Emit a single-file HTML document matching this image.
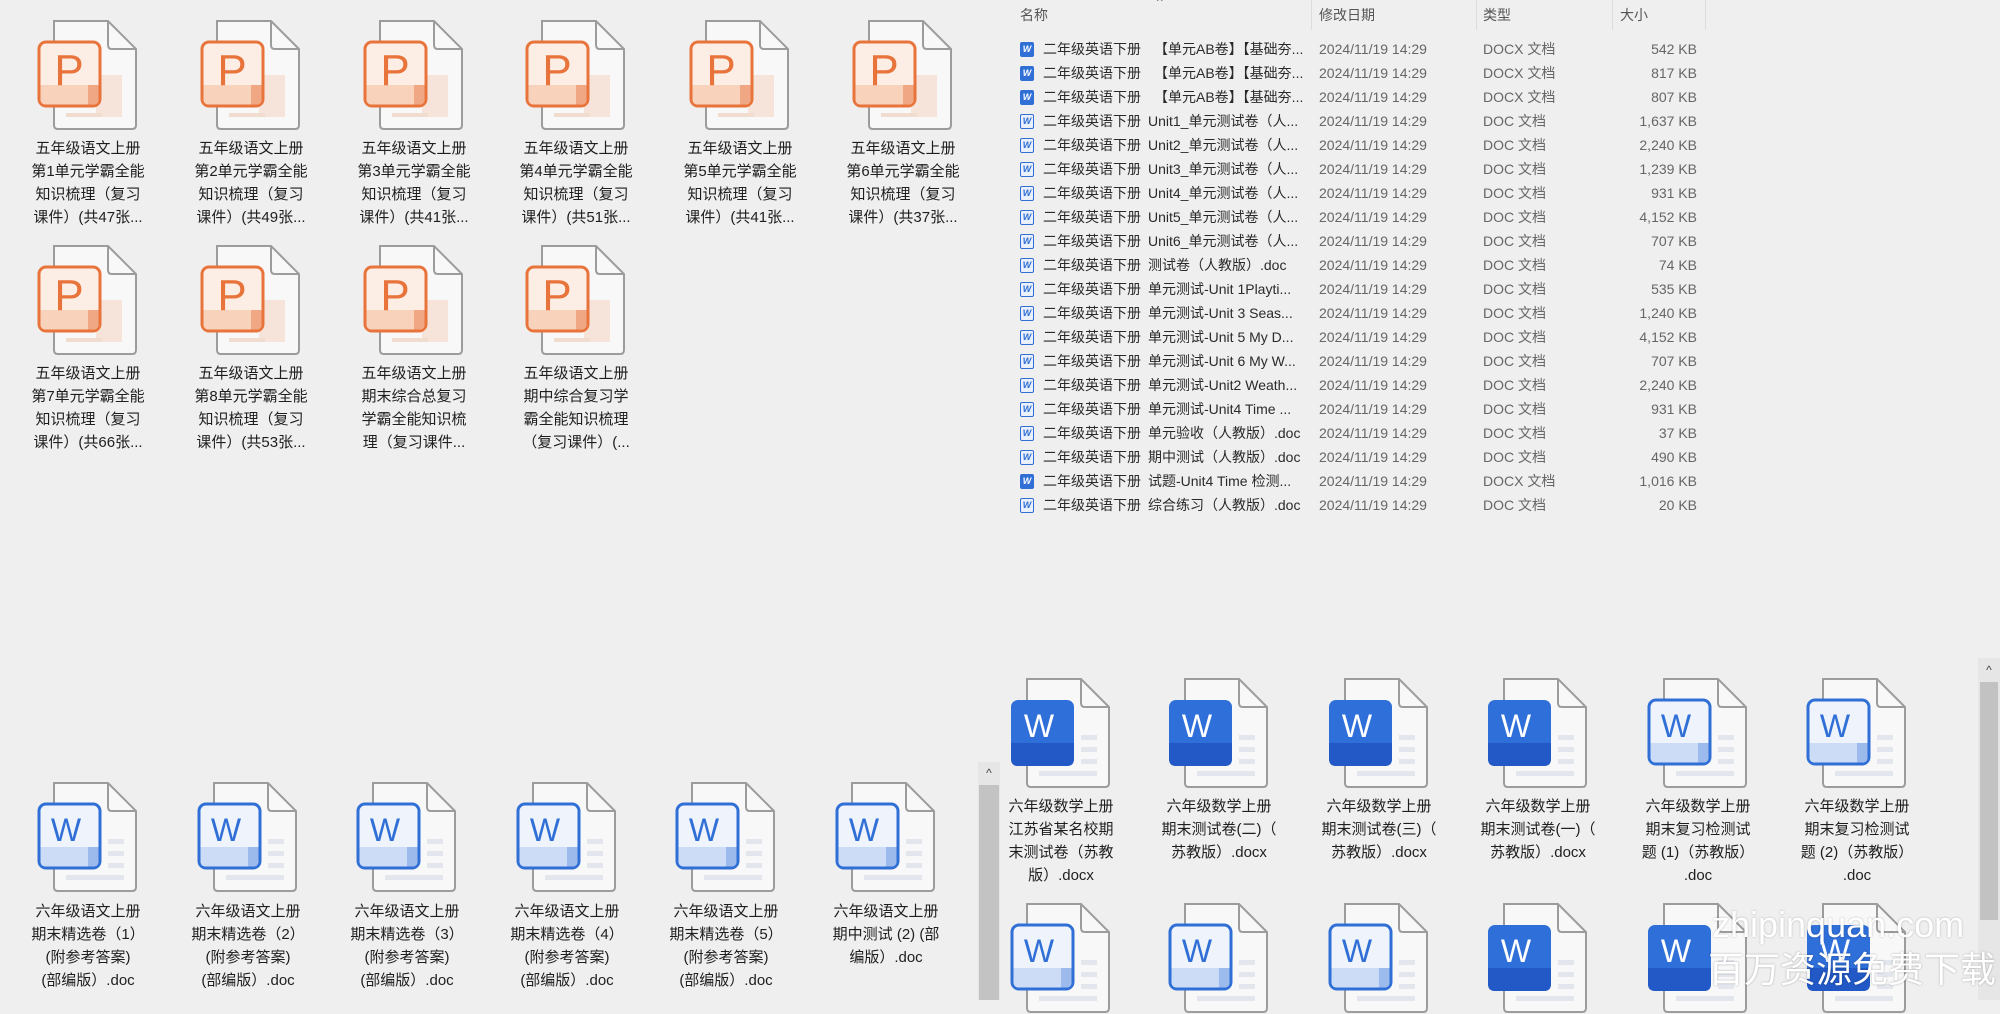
<!DOCTYPE html>
<html><head><meta charset="utf-8">
<style>
*{margin:0;padding:0;box-sizing:border-box}
html,body{width:2000px;height:1000px;overflow:hidden;background:#efefef;font-family:"Liberation Sans","Noto Sans CJK SC",sans-serif;color:#1e1e1e}
.it{position:absolute;width:170px}
.it svg{position:absolute;left:33px;top:0}
.it .t{position:absolute;left:0;width:170px;text-align:center;font-size:15px;line-height:23px;white-space:nowrap}
.row{position:absolute;left:1020px;height:24px;font-size:14px;line-height:24px;color:#2a2a2a;white-space:nowrap;width:700px}
.row span{position:absolute;top:0}
.ic{position:absolute;left:0;top:5px;width:14px;height:15px;border:1.5px solid #2f6fd6;border-radius:2px;background:#e9f0fb;color:#2f6fd6;font-size:9px;line-height:12px;text-align:center;font-weight:bold}
.ic.x{background:#2f6fd6;color:#fff}
.hd{position:absolute;top:5px;font-size:14px;color:#555}
.sep{position:absolute;top:0;width:1px;height:30px;background:#dcdcdc}
</style></head><body>

<svg width="0" height="0" style="position:absolute">
<defs>
<g id="page">
<path d="M18 2 H72 L100 30 V106 Q100 110 96 110 H22 Q18 110 18 106 Z" fill="#f8f8f8" stroke="#9c9c9c" stroke-width="2"/>
<path d="M72 2 V26 Q72 30 76 30 H100" fill="none" stroke="#9c9c9c" stroke-width="2"/>
</g>
<g id="ppt">
<use href="#page"/>
<rect x="60" y="56" width="26" height="42" fill="#f6e4da"/>
<rect x="30" y="94" width="36" height="4" fill="#f1dcd0"/>
<rect x="3" y="23" width="61" height="64" rx="7" fill="#fdeee5" stroke="#e8743b" stroke-width="3"/>
<path d="M4.5 66 H62.5 V80 Q62.5 85.5 57 85.5 H10 Q4.5 85.5 4.5 80 Z" fill="#f8d2bb"/>
<path d="M52 66 H62.5 V80 Q62.5 85.5 57 85.5 H52 Z" fill="#f0a884"/>
<text x="33" y="66" text-anchor="middle" font-family="Liberation Sans" font-size="44" fill="#e8743b">P</text>
</g>
<g id="lines">
<rect x="72" y="58" width="16" height="5" fill="#e3e6ec"/>
<rect x="72" y="70" width="16" height="5" fill="#e3e6ec"/>
<rect x="72" y="82" width="16" height="5" fill="#e3e6ec"/>
<rect x="30" y="94" width="58" height="5" fill="#e3e6ec"/>
</g>
<g id="wl">
<use href="#page"/><use href="#lines"/>
<rect x="3" y="23" width="61" height="64" rx="7" fill="#eef3fc" stroke="#2f6fd6" stroke-width="3"/>
<path d="M4.5 66 H62.5 V80 Q62.5 85.5 57 85.5 H10 Q4.5 85.5 4.5 80 Z" fill="#cddcf6"/>
<path d="M52 66 H62.5 V80 Q62.5 85.5 57 85.5 H52 Z" fill="#9dbaec"/>
<text x="30" y="60" text-anchor="middle" font-family="Liberation Sans" font-size="32" fill="#2f6fd6">W</text>
</g>
<g id="ws">
<use href="#page"/><use href="#lines"/>
<rect x="2" y="23" width="63" height="66" rx="7" fill="#2f6fd9"/>
<path d="M2 66 H65 V82 Q65 89 58 89 H9 Q2 89 2 82 Z" fill="#2259c6"/>
<text x="30" y="60" text-anchor="middle" font-family="Liberation Sans" font-size="32" fill="#fff">W</text>
</g>
</defs>
</svg>

<!-- PPT grid -->
<div class="it" style="left:3px;top:19px"><svg width="104" height="112"><use href="#ppt"/></svg><div class="t" style="top:118px">五年级语文上册<br>第1单元学霸全能<br>知识梳理（复习<br>课件）(共47张...</div></div>
<div class="it" style="left:166px;top:19px"><svg width="104" height="112"><use href="#ppt"/></svg><div class="t" style="top:118px">五年级语文上册<br>第2单元学霸全能<br>知识梳理（复习<br>课件）(共49张...</div></div>
<div class="it" style="left:329px;top:19px"><svg width="104" height="112"><use href="#ppt"/></svg><div class="t" style="top:118px">五年级语文上册<br>第3单元学霸全能<br>知识梳理（复习<br>课件）(共41张...</div></div>
<div class="it" style="left:491px;top:19px"><svg width="104" height="112"><use href="#ppt"/></svg><div class="t" style="top:118px">五年级语文上册<br>第4单元学霸全能<br>知识梳理（复习<br>课件）(共51张...</div></div>
<div class="it" style="left:655px;top:19px"><svg width="104" height="112"><use href="#ppt"/></svg><div class="t" style="top:118px">五年级语文上册<br>第5单元学霸全能<br>知识梳理（复习<br>课件）(共41张...</div></div>
<div class="it" style="left:818px;top:19px"><svg width="104" height="112"><use href="#ppt"/></svg><div class="t" style="top:118px">五年级语文上册<br>第6单元学霸全能<br>知识梳理（复习<br>课件）(共37张...</div></div>

<div class="it" style="left:3px;top:244px"><svg width="104" height="112"><use href="#ppt"/></svg><div class="t" style="top:118px">五年级语文上册<br>第7单元学霸全能<br>知识梳理（复习<br>课件）(共66张...</div></div>
<div class="it" style="left:166px;top:244px"><svg width="104" height="112"><use href="#ppt"/></svg><div class="t" style="top:118px">五年级语文上册<br>第8单元学霸全能<br>知识梳理（复习<br>课件）(共53张...</div></div>
<div class="it" style="left:329px;top:244px"><svg width="104" height="112"><use href="#ppt"/></svg><div class="t" style="top:118px">五年级语文上册<br>期末综合总复习<br>学霸全能知识梳<br>理（复习课件...</div></div>
<div class="it" style="left:491px;top:244px"><svg width="104" height="112"><use href="#ppt"/></svg><div class="t" style="top:118px">五年级语文上册<br>期中综合复习学<br>霸全能知识梳理<br>（复习课件）(...</div></div>

<!-- list header -->
<div class="hd" style="left:1020px">名称</div>
<div class="hd" style="left:1157px;top:-6px;font-size:12px">^</div>
<div class="hd" style="left:1319px">修改日期</div>
<div class="hd" style="left:1483px">类型</div>
<div class="hd" style="left:1620px">大小</div>
<div class="sep" style="left:1311px"></div>
<div class="sep" style="left:1476px"></div>
<div class="sep" style="left:1612px"></div>
<div class="sep" style="left:1705px"></div>

<div class="row" style="top:37px"><i class="ic x">W</i><span style="left:23px">二年级英语下册</span><span style="left:134px">【单元AB卷】【基础夯...</span><span style="left:299px;color:#666">2024/11/19 14:29</span><span style="left:463px;color:#666">DOCX 文档</span><span style="right:23px;color:#666">542 KB</span></div>
<div class="row" style="top:61px"><i class="ic x">W</i><span style="left:23px">二年级英语下册</span><span style="left:134px">【单元AB卷】【基础夯...</span><span style="left:299px;color:#666">2024/11/19 14:29</span><span style="left:463px;color:#666">DOCX 文档</span><span style="right:23px;color:#666">817 KB</span></div>
<div class="row" style="top:85px"><i class="ic x">W</i><span style="left:23px">二年级英语下册</span><span style="left:134px">【单元AB卷】【基础夯...</span><span style="left:299px;color:#666">2024/11/19 14:29</span><span style="left:463px;color:#666">DOCX 文档</span><span style="right:23px;color:#666">807 KB</span></div>
<div class="row" style="top:109px"><i class="ic">W</i><span style="left:23px">二年级英语下册</span><span style="left:128px">Unit1_单元测试卷（人...</span><span style="left:299px;color:#666">2024/11/19 14:29</span><span style="left:463px;color:#666">DOC 文档</span><span style="right:23px;color:#666">1,637 KB</span></div>
<div class="row" style="top:133px"><i class="ic">W</i><span style="left:23px">二年级英语下册</span><span style="left:128px">Unit2_单元测试卷（人...</span><span style="left:299px;color:#666">2024/11/19 14:29</span><span style="left:463px;color:#666">DOC 文档</span><span style="right:23px;color:#666">2,240 KB</span></div>
<div class="row" style="top:157px"><i class="ic">W</i><span style="left:23px">二年级英语下册</span><span style="left:128px">Unit3_单元测试卷（人...</span><span style="left:299px;color:#666">2024/11/19 14:29</span><span style="left:463px;color:#666">DOC 文档</span><span style="right:23px;color:#666">1,239 KB</span></div>
<div class="row" style="top:181px"><i class="ic">W</i><span style="left:23px">二年级英语下册</span><span style="left:128px">Unit4_单元测试卷（人...</span><span style="left:299px;color:#666">2024/11/19 14:29</span><span style="left:463px;color:#666">DOC 文档</span><span style="right:23px;color:#666">931 KB</span></div>
<div class="row" style="top:205px"><i class="ic">W</i><span style="left:23px">二年级英语下册</span><span style="left:128px">Unit5_单元测试卷（人...</span><span style="left:299px;color:#666">2024/11/19 14:29</span><span style="left:463px;color:#666">DOC 文档</span><span style="right:23px;color:#666">4,152 KB</span></div>
<div class="row" style="top:229px"><i class="ic">W</i><span style="left:23px">二年级英语下册</span><span style="left:128px">Unit6_单元测试卷（人...</span><span style="left:299px;color:#666">2024/11/19 14:29</span><span style="left:463px;color:#666">DOC 文档</span><span style="right:23px;color:#666">707 KB</span></div>
<div class="row" style="top:253px"><i class="ic">W</i><span style="left:23px">二年级英语下册</span><span style="left:128px">测试卷（人教版）.doc</span><span style="left:299px;color:#666">2024/11/19 14:29</span><span style="left:463px;color:#666">DOC 文档</span><span style="right:23px;color:#666">74 KB</span></div>
<div class="row" style="top:277px"><i class="ic">W</i><span style="left:23px">二年级英语下册</span><span style="left:128px">单元测试-Unit 1Playti...</span><span style="left:299px;color:#666">2024/11/19 14:29</span><span style="left:463px;color:#666">DOC 文档</span><span style="right:23px;color:#666">535 KB</span></div>
<div class="row" style="top:301px"><i class="ic">W</i><span style="left:23px">二年级英语下册</span><span style="left:128px">单元测试-Unit 3 Seas...</span><span style="left:299px;color:#666">2024/11/19 14:29</span><span style="left:463px;color:#666">DOC 文档</span><span style="right:23px;color:#666">1,240 KB</span></div>
<div class="row" style="top:325px"><i class="ic">W</i><span style="left:23px">二年级英语下册</span><span style="left:128px">单元测试-Unit 5 My D...</span><span style="left:299px;color:#666">2024/11/19 14:29</span><span style="left:463px;color:#666">DOC 文档</span><span style="right:23px;color:#666">4,152 KB</span></div>
<div class="row" style="top:349px"><i class="ic">W</i><span style="left:23px">二年级英语下册</span><span style="left:128px">单元测试-Unit 6 My W...</span><span style="left:299px;color:#666">2024/11/19 14:29</span><span style="left:463px;color:#666">DOC 文档</span><span style="right:23px;color:#666">707 KB</span></div>
<div class="row" style="top:373px"><i class="ic">W</i><span style="left:23px">二年级英语下册</span><span style="left:128px">单元测试-Unit2 Weath...</span><span style="left:299px;color:#666">2024/11/19 14:29</span><span style="left:463px;color:#666">DOC 文档</span><span style="right:23px;color:#666">2,240 KB</span></div>
<div class="row" style="top:397px"><i class="ic">W</i><span style="left:23px">二年级英语下册</span><span style="left:128px">单元测试-Unit4 Time ...</span><span style="left:299px;color:#666">2024/11/19 14:29</span><span style="left:463px;color:#666">DOC 文档</span><span style="right:23px;color:#666">931 KB</span></div>
<div class="row" style="top:421px"><i class="ic">W</i><span style="left:23px">二年级英语下册</span><span style="left:128px">单元验收（人教版）.doc</span><span style="left:299px;color:#666">2024/11/19 14:29</span><span style="left:463px;color:#666">DOC 文档</span><span style="right:23px;color:#666">37 KB</span></div>
<div class="row" style="top:445px"><i class="ic">W</i><span style="left:23px">二年级英语下册</span><span style="left:128px">期中测试（人教版）.doc</span><span style="left:299px;color:#666">2024/11/19 14:29</span><span style="left:463px;color:#666">DOC 文档</span><span style="right:23px;color:#666">490 KB</span></div>
<div class="row" style="top:469px"><i class="ic x">W</i><span style="left:23px">二年级英语下册</span><span style="left:128px">试题-Unit4 Time 检测...</span><span style="left:299px;color:#666">2024/11/19 14:29</span><span style="left:463px;color:#666">DOCX 文档</span><span style="right:23px;color:#666">1,016 KB</span></div>
<div class="row" style="top:493px"><i class="ic">W</i><span style="left:23px">二年级英语下册</span><span style="left:128px">综合练习（人教版）.doc</span><span style="left:299px;color:#666">2024/11/19 14:29</span><span style="left:463px;color:#666">DOC 文档</span><span style="right:23px;color:#666">20 KB</span></div>

<!-- bottom-left word grid -->
<div class="it" style="left:3px;top:781px"><svg width="104" height="112"><use href="#wl"/></svg><div class="t" style="top:119px">六年级语文上册<br>期末精选卷（1）<br>(附参考答案)<br>(部编版）.doc</div></div>
<div class="it" style="left:163px;top:781px"><svg width="104" height="112"><use href="#wl"/></svg><div class="t" style="top:119px">六年级语文上册<br>期末精选卷（2）<br>(附参考答案)<br>(部编版）.doc</div></div>
<div class="it" style="left:322px;top:781px"><svg width="104" height="112"><use href="#wl"/></svg><div class="t" style="top:119px">六年级语文上册<br>期末精选卷（3）<br>(附参考答案)<br>(部编版）.doc</div></div>
<div class="it" style="left:482px;top:781px"><svg width="104" height="112"><use href="#wl"/></svg><div class="t" style="top:119px">六年级语文上册<br>期末精选卷（4）<br>(附参考答案)<br>(部编版）.doc</div></div>
<div class="it" style="left:641px;top:781px"><svg width="104" height="112"><use href="#wl"/></svg><div class="t" style="top:119px">六年级语文上册<br>期末精选卷（5）<br>(附参考答案)<br>(部编版）.doc</div></div>
<div class="it" style="left:801px;top:781px"><svg width="104" height="112"><use href="#wl"/></svg><div class="t" style="top:119px">六年级语文上册<br>期中测试 (2) (部<br>编版）.doc</div></div>

<div style="position:absolute;left:978px;top:762px;width:22px;height:238px;background:#e6e6e6"></div>
<div style="position:absolute;left:979px;top:785px;width:20px;height:215px;background:#c3c3c3"></div>
<div style="position:absolute;left:978px;top:763px;width:22px;text-align:center;font-size:12px;color:#444;line-height:20px">^</div>

<!-- bottom-right word grid -->
<div class="it" style="left:976px;top:677px"><svg width="104" height="112"><use href="#ws"/></svg><div class="t" style="top:118px">六年级数学上册<br>江苏省某名校期<br>末测试卷（苏教<br>版）.docx</div></div>
<div class="it" style="left:1134px;top:677px"><svg width="104" height="112"><use href="#ws"/></svg><div class="t" style="top:118px">六年级数学上册<br>期末测试卷(二)（<br>苏教版）.docx</div></div>
<div class="it" style="left:1294px;top:677px"><svg width="104" height="112"><use href="#ws"/></svg><div class="t" style="top:118px">六年级数学上册<br>期末测试卷(三)（<br>苏教版）.docx</div></div>
<div class="it" style="left:1453px;top:677px"><svg width="104" height="112"><use href="#ws"/></svg><div class="t" style="top:118px">六年级数学上册<br>期末测试卷(一)（<br>苏教版）.docx</div></div>
<div class="it" style="left:1613px;top:677px"><svg width="104" height="112"><use href="#wl"/></svg><div class="t" style="top:118px">六年级数学上册<br>期末复习检测试<br>题 (1)（苏教版）<br>.doc</div></div>
<div class="it" style="left:1772px;top:677px"><svg width="104" height="112"><use href="#wl"/></svg><div class="t" style="top:118px">六年级数学上册<br>期末复习检测试<br>题 (2)（苏教版）<br>.doc</div></div>

<div class="it" style="left:976px;top:902px"><svg width="104" height="112"><use href="#wl"/></svg></div>
<div class="it" style="left:1134px;top:902px"><svg width="104" height="112"><use href="#wl"/></svg></div>
<div class="it" style="left:1294px;top:902px"><svg width="104" height="112"><use href="#wl"/></svg></div>
<div class="it" style="left:1453px;top:902px"><svg width="104" height="112"><use href="#ws"/></svg></div>
<div class="it" style="left:1613px;top:902px"><svg width="104" height="112"><use href="#ws"/></svg></div>
<div class="it" style="left:1772px;top:902px"><svg width="104" height="112"><use href="#ws"/></svg></div>

<div style="position:absolute;left:1978px;top:658px;width:22px;height:342px;background:#e6e6e6"></div>
<div style="position:absolute;left:1980px;top:682px;width:18px;height:238px;background:#c2c2c2"></div>
<div style="position:absolute;left:1978px;top:660px;width:22px;text-align:center;font-size:12px;color:#444;line-height:20px">^</div>

<!-- watermark -->
<div style="position:absolute;left:1712px;top:905px;font-size:36px;line-height:40px;color:#fff;text-shadow:0 0 2px rgba(0,0,0,.25);font-family:'Liberation Sans',sans-serif">zhipinquan.com</div>
<div style="position:absolute;left:1708px;top:948px;font-size:36px;line-height:44px;color:#fff;text-shadow:0 0 2px rgba(0,0,0,.3);font-family:'Liberation Sans','Noto Sans CJK SC',sans-serif">百万资源免费下载</div>
</body></html>
